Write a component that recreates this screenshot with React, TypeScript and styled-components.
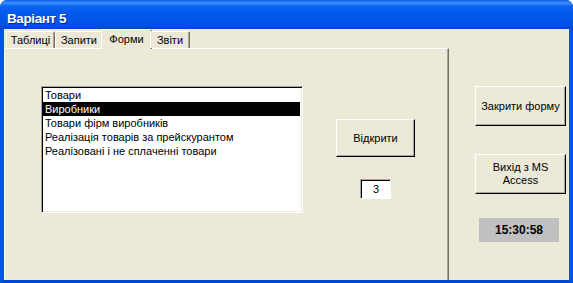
import React from 'react';
import styled, { createGlobalStyle } from 'styled-components';

const Global = createGlobalStyle`
  html, body { margin: 0; padding: 0; background: #ffffff; }
  body {
    width: 573px; height: 283px; overflow: hidden;
    font-family: "Liberation Sans", Arial, sans-serif;
    font-size: 11px; color: #000;
  }
`;

const Window = styled.div`
  width: 573px;
  height: 283px;
  display: flex;
  flex-direction: column;
  border-radius: 7px 7px 0 0;
  overflow: hidden;
  background: #0054E3;
`;

const TitleBar = styled.div`
  height: 29px;
  flex: none;
  display: flex;
  align-items: center;
  padding: 7px 0 0 7px;
  box-sizing: border-box;
  background: linear-gradient(to bottom, #0A5DE6 0%, #3C8EFF 10%, #0B63F0 22%, #0058EA 50%, #0055E5 80%, #0048CC 100%);
  color: #fff;
  font-weight: bold;
  font-size: 13.5px;
  text-shadow: 1px 1px 0 #0A2A8A;
  letter-spacing: -0.4px;
`;

const Frame = styled.div`
  flex: 1;
  display: flex;
  min-height: 0;
  background: #ECE9D8;
  border-left: 4px solid #0055E5;
  border-right: 4px solid #0055E5;
  border-bottom: 3px solid #0048D0;
`;

const TabArea = styled.div`
  width: 445px;
  flex: none;
  display: flex;
  flex-direction: column;
`;

const TabStrip = styled.div`
  height: 19px;
  flex: none;
  display: flex;
  align-items: flex-end;
  padding-left: 2px;
  position: relative;
  z-index: 1;
`;

const Tab = styled.div<{ $active?: boolean; $w: number }>`
  box-sizing: border-box;
  height: ${p => (p.$active ? 20 : 17)}px;
  margin: ${p => (p.$active ? '0 -2px -1px -2px' : '0')};
  padding: ${p => (p.$active ? '0 0 2px 0' : '0')};
  width: ${p => p.$w + (p.$active ? 4 : 0)}px;
  display: flex;
  align-items: center;
  justify-content: center;
  background: #ECE9D8;
  border-top: 1px solid #fff;
  border-left: 1px solid #fff;
  border-right: 1px solid #716F64;
  box-shadow: inset -1px 0 0 #ACA899;
  border-radius: 2px 2px 0 0;
`;

const Panel = styled.div`
  flex: 1;
  box-sizing: border-box;
  border-top: 1px solid #fff;
  border-left: 1px solid #fff;
  border-right: 1px solid #716F64;
  box-shadow: inset -1px 0 0 #ACA899;
  display: flex;
  align-items: flex-start;
  gap: 33px;
  padding: 37px 0 0 36px;
`;

const ListBox = styled.div`
  width: 262px;
  height: 127px;
  box-sizing: border-box;
  background: #fff;
  border-top: 1px solid #ACA899;
  border-left: 1px solid #ACA899;
  border-bottom: 1px solid #fff;
  border-right: 1px solid #fff;
  box-shadow: inset 1px 1px 0 #000, inset -1px -1px 0 #F1EFE2;
  padding: 1px 2px 1px 1px;
`;

const Item = styled.div<{ $sel?: boolean }>`
  height: 14px;
  line-height: 14px;
  padding-left: 2px;
  white-space: nowrap;
  background: ${p => (p.$sel ? '#000' : 'transparent')};
  color: ${p => (p.$sel ? '#fff' : '#000')};
`;

const MidColumn = styled.div`
  margin-top: 33px;
  display: flex;
  flex-direction: column;
  align-items: center;
  gap: 22px;
`;

const Button = styled.button<{ $w: number; $h: number }>`
  width: ${p => p.$w}px;
  height: ${p => p.$h}px;
  box-sizing: border-box;
  margin: 0;
  padding: 0 2px;
  background: #ECE9D8;
  font-family: "Liberation Sans", Arial, sans-serif;
  font-size: 11px;
  line-height: 13px;
  color: #000;
  text-align: center;
  border-top: 1px solid #fff;
  border-left: 1px solid #fff;
  border-right: 1px solid #000;
  border-bottom: 1px solid #000;
  box-shadow: inset -1px -1px 0 #ACA899;
  cursor: default;
`;

const NumberBox = styled.div`
  width: 31px;
  height: 20px;
  box-sizing: border-box;
  background: #fff;
  border-top: 1px solid #ACA899;
  border-left: 1px solid #ACA899;
  border-bottom: 1px solid #fff;
  border-right: 1px solid #fff;
  box-shadow: inset 1px 1px 0 #000;
  display: flex;
  align-items: center;
  justify-content: center;
  padding-left: 1px;
`;

const RightColumn = styled.div`
  flex: 1;
  display: flex;
  flex-direction: column;
  padding: 57px 0 0 26px;
  gap: 28px;
`;

const Clock = styled.div`
  width: 80px;
  height: 24px;
  margin: -4px 0 0 4px;
  background: #C0C0C0;
  display: flex;
  align-items: center;
  justify-content: center;
  font-weight: bold;
  font-size: 12px;
`;

const items = [
  'Товари',
  'Виробники',
  'Товари фірм виробників',
  'Реалізація товарів за прейскурантом',
  'Реалізовані і не сплаченні товари',
];

const tabs: { label: string; w: number; active?: boolean }[] = [
  { label: 'Таблиці', w: 49 },
  { label: 'Запити', w: 48 },
  { label: 'Форми', w: 47, active: true },
  { label: 'Звіти', w: 40 },
];

export default function App() {
  return (
    <>
      <Global />
      <Window>
        <TitleBar>Варіант 5</TitleBar>
        <Frame>
          <TabArea>
            <TabStrip>
              {tabs.map(t => (
                <Tab key={t.label} $active={t.active} $w={t.w}>{t.label}</Tab>
              ))}
            </TabStrip>
            <Panel>
              <ListBox>
                {items.map((it, i) => (
                  <Item key={it} $sel={i === 1}>{it}</Item>
                ))}
              </ListBox>
              <MidColumn>
                <Button $w={79} $h={38}>Відкрити</Button>
                <NumberBox>3</NumberBox>
              </MidColumn>
            </Panel>
          </TabArea>
          <RightColumn>
            <Button $w={91} $h={40}>Закрити форму</Button>
            <Button $w={91} $h={40}>Вихід з MS<br />Access</Button>
            <Clock>15:30:58</Clock>
          </RightColumn>
        </Frame>
      </Window>
    </>
  );
}
